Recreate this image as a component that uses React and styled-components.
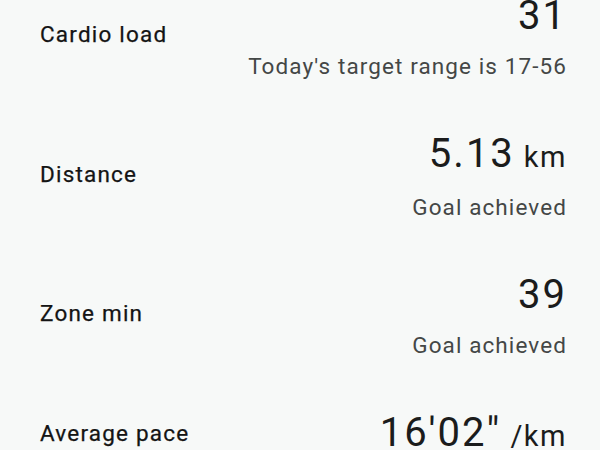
import styled, { createGlobalStyle } from 'styled-components'

const GlobalStyle = createGlobalStyle`
    html, body {
        margin: 0;
        padding: 0;
        background: #f7f9f8;
        overflow: hidden;
    }

    body {
        font-family: Roboto, "Liberation Sans", Arial, sans-serif;
        -webkit-font-smoothing: antialiased;
    }
`

const stats = [
    { label: 'Cardio load', value: '31', note: "Today's target range is 17-56" },
    { label: 'Distance', value: '5.13', unit: 'km', note: 'Goal achieved' },
    { label: 'Zone min', value: '39', note: 'Goal achieved' },
    { label: 'Average pace', value: `16'02"`, unit: '/km' },
]

function StatRow({ className, label, value, unit, note }) {
    return (
        <div className={className}>
            <Label>{label}</Label>
            <Reading>
                <Value>
                    {value}
                    {unit && <Unit>{unit}</Unit>}
                </Value>
                {note && <Note>{note}</Note>}
            </Reading>
        </div>
    )
}

const Row = styled(StatRow)`
    display: flex;
    justify-content: space-between;
    align-items: center;
`

const Label = styled.div`
    margin-bottom: 4px;
    font-size: 22.5px;
    line-height: 28px;
    font-weight: 400;
    letter-spacing: 1.2px;
    color: #141414;
    -webkit-text-stroke: 0.25px #141414;
`

const Reading = styled.div`
    display: flex;
    flex-direction: column;
    align-items: flex-end;
    text-align: right;
`

const Value = styled.div`
    font-size: 40px;
    line-height: 48px;
    font-weight: 400;
    letter-spacing: 2px;
    color: #1b1c1c;
    white-space: nowrap;
`

const Unit = styled.span`
    font-size: 29px;
    letter-spacing: 1.5px;
    margin-left: 9px;
`

const Note = styled.div`
    margin-top: 12px;
    font-size: 22.5px;
    line-height: 28px;
    letter-spacing: 1.1px;
    color: #444746;
`

const StatList = styled.div`
    display: flex;
    flex-direction: column;
    gap: 50px;
    /* list is scrolled a little, so the first reading is cut at the top */
    margin-top: -8px;
    padding: 0 33px 0 40px;
`

export default function App() {
    return (
        <>
            <GlobalStyle />
            <StatList>
                {stats.map(stat => (
                    <Row key={stat.label} {...stat} />
                ))}
            </StatList>
        </>
    )
}
